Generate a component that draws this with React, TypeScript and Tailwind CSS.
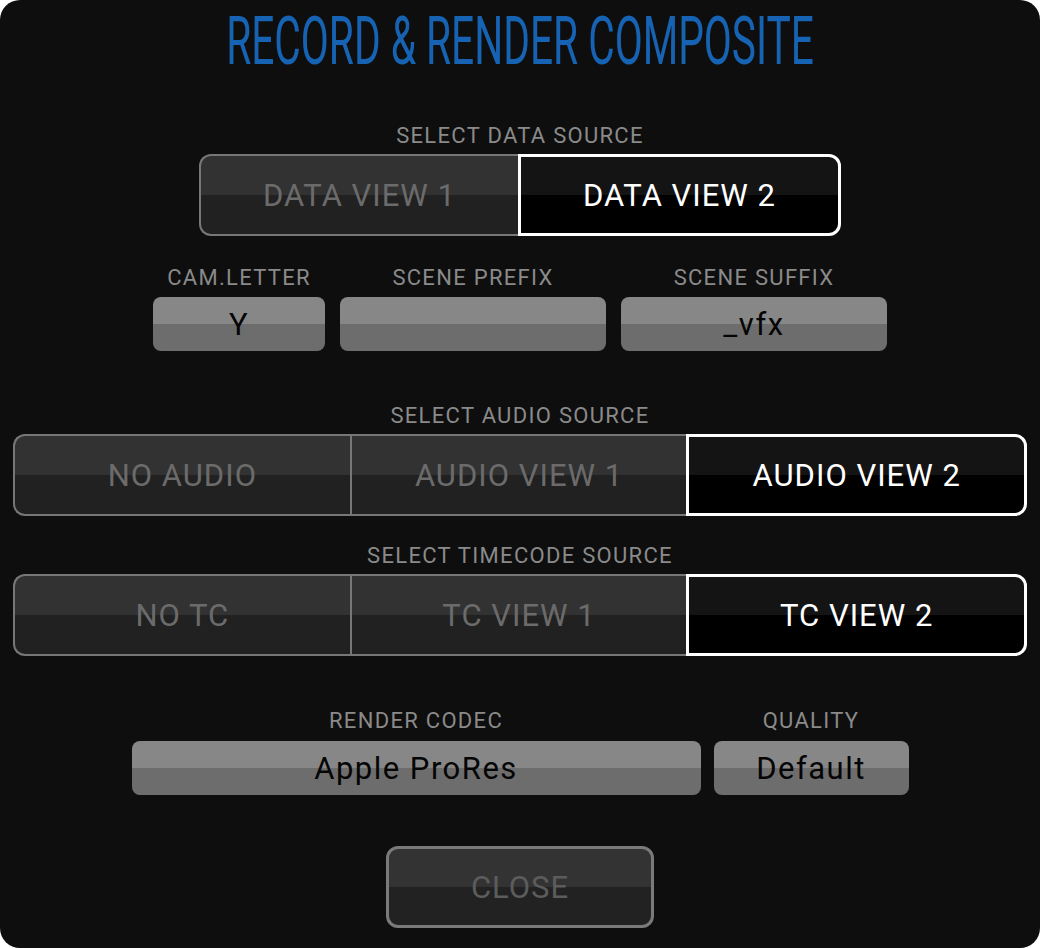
import React from "react";

const UNSEL_BG = "bg-[linear-gradient(to_bottom,#323232_50%,#212121_50%)] text-[#6b6b6b]";
const SEL_BG = "bg-[linear-gradient(to_bottom,#141414_50%,#000000_50%)] text-white";

function Label({ children, className = "" }: { children: React.ReactNode; className?: string }) {
  return (
    <div className={"h-[22px] text-center text-[22px] leading-none font-normal tracking-[1.3px] text-[#8a8a8a] " + className}>
      {children}
    </div>
  );
}

function Segmented({ items, className }: { items: string[]; className: string }) {
  return (
    <div className={"flex h-[82px] " + className}>
      {items.map((t, i) => {
        const last = i === items.length - 1;
        const first = i === 0;
        let cls = "";
        if (last) {
          cls = "border-[3px] border-white rounded-r-[12px] " + SEL_BG;
        } else if (first) {
          cls = "border-y-2 border-l-2 border-[#777777] rounded-l-[12px] " + UNSEL_BG;
        } else {
          cls = "border-y-2 border-l-2 border-[#777777] " + UNSEL_BG;
        }
        return (
          <div
            key={t}
            className={"flex flex-1 items-center justify-center text-[31px] leading-none tracking-[1px] " + cls}
          >
            {t}
          </div>
        );
      })}
    </div>
  );
}

function Field({ value, className }: { value: string; className: string }) {
  return (
    <div
      className={
        "flex h-[54px] items-center justify-center rounded-[8px] bg-[linear-gradient(to_bottom,#878787_50%,#6d6d6d_50%)] text-[31px] leading-none font-normal tracking-[1.5px] text-[#050505] " +
        className
      }
    >
      {value}
    </div>
  );
}

export default function App() {
  return (
    <div className="h-[948px] w-[1040px] bg-white font-[Roboto,sans-serif]">
      <div className="flex h-[948px] w-[1040px] flex-col items-center rounded-[20px] bg-[#0e0e0e] pt-[8px]">
        <div className="h-[67px] w-full scale-x-[0.607] text-center text-[67px] leading-none font-normal text-[#1763b3]">
          RECORD &amp; RENDER COMPOSITE
        </div>

        <Label className="mt-[50px]">SELECT DATA SOURCE</Label>
        <Segmented items={["DATA VIEW 1", "DATA VIEW 2"]} className="mt-[7px] w-[642px]" />

        <div className="mt-[31px] flex gap-[15px]">
          <div className="flex w-[172px] flex-col gap-[8px]">
            <Label>CAM.LETTER</Label>
            <Field value="Y" className="w-[172px]" />
          </div>
          <div className="flex w-[266px] flex-col gap-[8px]">
            <Label>SCENE PREFIX</Label>
            <Field value="" className="w-[266px]" />
          </div>
          <div className="flex w-[266px] flex-col gap-[8px]">
            <Label>SCENE SUFFIX</Label>
            <Field value="_vfx" className="w-[266px]" />
          </div>
        </div>

        <Label className="mt-[54px]">SELECT AUDIO SOURCE</Label>
        <Segmented items={["NO AUDIO", "AUDIO VIEW 1", "AUDIO VIEW 2"]} className="mt-[7px] w-[1014px]" />

        <Label className="mt-[29px]">SELECT TIMECODE SOURCE</Label>
        <Segmented items={["NO TC", "TC VIEW 1", "TC VIEW 2"]} className="mt-[7px] w-[1014px]" />

        <div className="mt-[54px] flex gap-[13px]">
          <div className="flex w-[569px] flex-col gap-[9px]">
            <Label>RENDER CODEC</Label>
            <Field value="Apple ProRes" className="w-[569px]" />
          </div>
          <div className="flex w-[195px] flex-col gap-[9px]">
            <Label>QUALITY</Label>
            <Field value="Default" className="w-[195px]" />
          </div>
        </div>

        <div className="mt-[51px] flex h-[82px] w-[268px] items-center justify-center rounded-[12px] border-[3px] border-[#7a7a7a] bg-[linear-gradient(to_bottom,#333333_50%,#222222_50%)] text-[31px] leading-none tracking-[1px] text-[#5c5c5c]">
          CLOSE
        </div>
      </div>
    </div>
  );
}
